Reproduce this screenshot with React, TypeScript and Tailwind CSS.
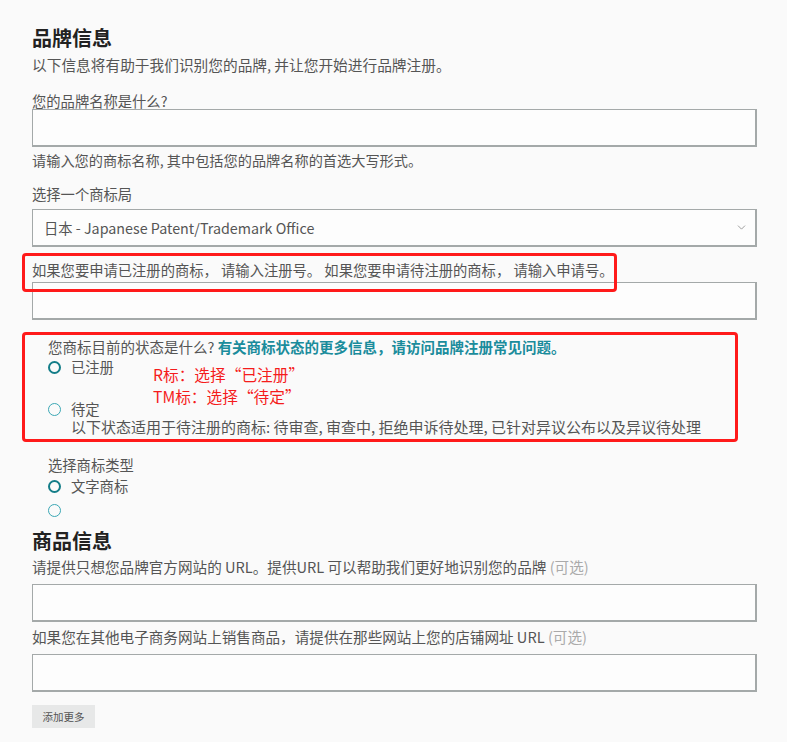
import { ChevronDown } from "lucide-react";

const font = "font-['Noto_Sans_CJK_SC','Noto_Sans',sans-serif]";

const Field = () => (
  <div className="h-[38px] w-full border-t border-l border-r-2 border-b-2 border-[#a4a9a9] bg-[#fdfdfd]" />
);

const Radio = ({ strong }: { strong?: boolean }) => (
  <span
    className={
      strong
        ? "inline-block h-[13px] w-[13px] shrink-0 rounded-full border-[2.5px] border-[#137d88]"
        : "inline-block h-[13px] w-[13px] shrink-0 rounded-full border-[1.5px] border-[#3aa7b4]"
    }
  />
);

export default function App() {
  return (
    <div className={`min-h-screen bg-[#fafafa] ${font}`}>
      <div className="relative pl-8 pr-[30px] pt-[26px] pb-4 text-[#555]">
        {/* 品牌信息 */}
        <h2 className="text-[20px] font-bold leading-[24px] text-[#222]">品牌信息</h2>
        <p className="mt-[5px] text-[14.7px] leading-5">
          以下信息将有助于我们识别您的品牌, 并让您开始进行品牌注册。
        </p>

        <p className="mt-[18px] text-[14.3px] leading-4">您的品牌名称是什么?</p>
        <Field />
        <p className="mt-[5px] text-[14.2px] leading-4">
          请输入您的商标名称, 其中包括您的品牌名称的首选大写形式。
        </p>

        <p className="mt-[18px] text-[14.3px] leading-4">选择一个商标局</p>
        <div className="mt-[7px] flex h-[38px] items-center justify-between border-t border-l border-r-2 border-b-2 border-[#a4a9a9] bg-[#fdfdfd] pl-[11px] pr-[7px]">
          <span className="text-[14.3px] text-[#555]">日本 - Japanese Patent/Trademark Office</span>
          <ChevronDown className="h-[13px] w-[13px] text-[#888]" strokeWidth={1.5} />
        </div>

        <p className="mt-[15px] text-[14.3px] leading-4">
          如果您要申请已注册的商标， 请输入注册号。 如果您要申请待注册的商标， 请输入申请号。
        </p>
        <div className="mt-[4px]">
          <Field />
        </div>

        {/* 商标状态 */}
        <div className="pl-4">
          <p className="mt-[19px] text-[14.5px] leading-4">
            您商标目前的状态是什么?{" "}
            <span className="font-bold text-[#1b8c9c]">
              有关商标状态的更多信息，请访问品牌注册常见问题。
            </span>
          </p>
          <div className="mt-[2px] flex h-5 items-center gap-[10px]">
            <Radio strong />
            <span className="text-[14.3px]">已注册</span>
          </div>
          <div className="mt-[23px] flex items-start gap-[10px]">
            <span className="mt-[3px] flex">
              <Radio />
            </span>
            <p className="text-[14.3px] leading-[18px]">
              待定
              <br />
              <span className="text-[15px]">
                以下状态适用于待注册的商标: 待审查, 审查中, 拒绝申诉待处理, 已针对异议公布以及异议待处理
              </span>
            </p>
          </div>

          <p className="mt-[21px] text-[14.3px] leading-4">选择商标类型</p>
          <div className="mt-[3px] flex h-5 items-center gap-[10px]">
            <Radio strong />
            <span className="text-[14.3px]">文字商标</span>
          </div>
          <div className="mt-[4px] flex h-5 items-center">
            <Radio />
          </div>
        </div>

        {/* 商品信息 */}
        <h2 className="mt-[9px] text-[20px] font-bold leading-[24px] text-[#222]">商品信息</h2>
        <p className="mt-[6px] text-[14.6px] leading-4">
          请提供只想您品牌官方网站的 URL。提供URL 可以帮助我们更好地识别您的品牌{" "}
          <span className="text-[#aaa]">(可选)</span>
        </p>
        <div className="mt-[9px]">
          <Field />
        </div>
        <p className="mt-[7px] text-[14.6px] leading-4">
          如果您在其他电子商务网站上销售商品，请提供在那些网站上您的店铺网址 URL{" "}
          <span className="text-[#aaa]">(可选)</span>
        </p>
        <div className="mt-[9px]">
          <Field />
        </div>
        <button className="mt-[13px] h-[23px] w-[63px] bg-[#e7e8e8] text-[10.5px] text-[#555]">
          添加更多
        </button>

        {/* annotations */}
        <div className="absolute left-[22px] top-[253px] h-[39px] w-[595px] rounded-[4px] border-[3px] border-[#ff1a1a]" />
        <div className="absolute left-[22px] top-[332px] h-[110px] w-[716px] rounded-[4px] border-[3px] border-[#ff1a1a]" />
        <div className="absolute left-[153px] top-[364px] text-[15.7px] leading-[22px] text-[#f51c1c]">
          <p>R标：选择“已注册”</p>
          <p>TM标：选择“待定”</p>
        </div>
      </div>
    </div>
  );
}
